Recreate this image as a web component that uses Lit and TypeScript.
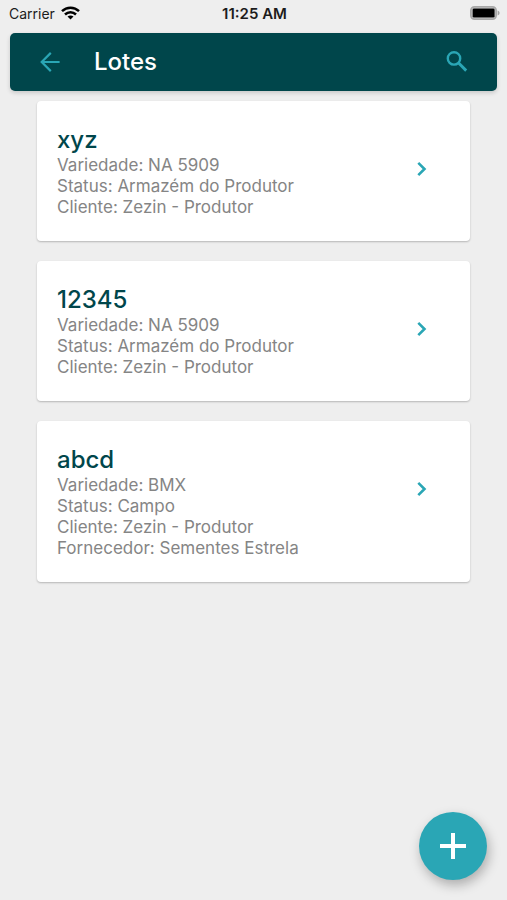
import { LitElement, html, css } from "lit";
import { customElement, property } from "lit/decorators.js";

interface Lote {
  nome: string;
  detalhes: [string, string][];
}

const LOTES: Lote[] = [
  {
    nome: "xyz",
    detalhes: [
      ["Variedade", "NA 5909"],
      ["Status", "Armazém do Produtor"],
      ["Cliente", "Zezin - Produtor"],
    ],
  },
  {
    nome: "12345",
    detalhes: [
      ["Variedade", "NA 5909"],
      ["Status", "Armazém do Produtor"],
      ["Cliente", "Zezin - Produtor"],
    ],
  },
  {
    nome: "abcd",
    detalhes: [
      ["Variedade", "BMX"],
      ["Status", "Campo"],
      ["Cliente", "Zezin - Produtor"],
      ["Fornecedor", "Sementes Estrela"],
    ],
  },
];

const buttonReset = css`
  button {
    display: flex;
    align-items: center;
    justify-content: center;
    margin: 0;
    padding: 0;
    border: 0;
    background: none;
    color: #2aa6b5;
    font: inherit;
    cursor: pointer;
  }
  svg {
    display: block;
  }
`;

@customElement("status-bar")
export class StatusBar extends LitElement {
  static styles = css`
    :host {
      display: grid;
      grid-template-columns: 1fr auto 1fr;
      align-items: center;
      height: 26px;
      padding: 0 7px 0 9px;
      font-size: 14px;
      color: #1c1c1c;
    }
    .carrier {
      display: flex;
      align-items: center;
      gap: 6px;
    }
    .time {
      font-size: 15px;
      font-weight: 600;
    }
    .battery {
      justify-self: end;
    }
    svg {
      display: block;
    }
  `;

  render() {
    return html`
      <div class="carrier">
        <span>Carrier</span>
        <svg width="19" height="14" viewBox="0 0 19 14" fill="none" stroke="#000" stroke-width="2.5" aria-hidden="true">
          <path d="M1 5.2C5.8 0.6 13.2 0.6 18 5.2" />
          <path d="M4 8.5C7.2 5.4 11.8 5.4 15 8.5" />
          <path d="M9.5 13.6L6.5 10.6C8.2 9.1 10.8 9.1 12.5 10.6Z" fill="#000" stroke="none" />
        </svg>
      </div>
      <span class="time">11:25 AM</span>
      <svg class="battery" width="30" height="14" viewBox="0 0 30 14" aria-hidden="true">
        <rect x="0.9" y="0.9" width="25.2" height="12.2" rx="3.6" fill="#d8d8d8" stroke="#a8a8a8" stroke-width="1.8" />
        <rect x="2.6" y="2.4" width="22" height="9.2" rx="1.4" fill="#000" />
        <path d="M27.6 4.6C30.2 5.4 30.2 8.6 27.6 9.4Z" fill="#a3a3a3" />
      </svg>
    `;
  }
}

@customElement("app-bar")
export class AppBar extends LitElement {
  @property() heading = "";

  static styles = [
    buttonReset,
    css`
      :host {
        display: flex;
        align-items: center;
        height: 58px;
        padding: 0 20px;
        box-sizing: border-box;
        border-radius: 5px;
        background: #00464b;
        box-shadow: 0 2px 4px rgba(0, 0, 0, 0.16);
      }
      button {
        width: 40px;
        height: 40px;
      }
      h1 {
        flex: 1;
        margin: 0 0 0 24px;
        font-size: 24px;
        line-height: 32px;
        font-weight: 500;
        color: #fff;
      }
    `,
  ];

  render() {
    return html`
      <button type="button" aria-label="Voltar">
        <svg width="20" height="20" viewBox="0 0 20 20" fill="none" stroke="currentColor" stroke-width="2.2">
          <path d="M19.6 10H2M10.8 0.9L1.7 10L10.8 19.1" />
        </svg>
      </button>
      <h1>${this.heading}</h1>
      <button type="button" aria-label="Buscar">
        <svg width="22" height="22" viewBox="0 0 22 22" fill="none" stroke="currentColor">
          <circle cx="8" cy="7.4" r="6.2" stroke-width="2.4" />
          <path d="M12.4 11.8L20.2 19.6" stroke-width="2.9" />
        </svg>
      </button>
    `;
  }
}

@customElement("lote-card")
export class LoteCard extends LitElement {
  @property({ attribute: false }) lote!: Lote;

  static styles = [
    buttonReset,
    css`
      :host {
        display: flex;
        align-items: flex-start;
        padding: 24px 28px 23px 20px;
        border-radius: 4px;
        background: #fff;
        box-shadow: 0 1px 2px rgba(0, 0, 0, 0.24);
      }
      .text {
        flex: 1;
        min-width: 0;
      }
      h2 {
        margin: 0;
        font-size: 24px;
        line-height: 30px;
        font-weight: 500;
        color: #00464b;
      }
      p {
        margin: 0;
        font-size: 17px;
        line-height: 21px;
        color: #858585;
      }
      button {
        width: 40px;
        height: 40px;
        margin-top: 24px;
      }
    `,
  ];

  render() {
    return html`
      <div class="text">
        <h2>${this.lote.nome}</h2>
        ${this.lote.detalhes.map(([rotulo, valor]) => html`<p>${rotulo}: ${valor}</p>`)}
      </div>
      <button type="button" aria-label="Abrir lote ${this.lote.nome}">
        <svg width="10" height="16" viewBox="0 0 10 16" fill="none" stroke="currentColor" stroke-width="2.6">
          <path d="M1.3 1.8L7.5 8L1.3 14.2" />
        </svg>
      </button>
    `;
  }
}

@customElement("app-root")
export class AppRoot extends LitElement {
  static styles = [
    buttonReset,
    css`
      :host {
        display: flex;
        flex-direction: column;
        min-height: 100vh;
        background: #eeeeee;
        font-family: Inter, "Liberation Sans", sans-serif;
      }
      app-bar {
        margin: 7px 10px 0;
      }
      main {
        display: flex;
        flex-direction: column;
        gap: 20px;
        padding: 10px 37px 100px;
      }
      .add {
        position: fixed;
        right: 20px;
        bottom: 20px;
        width: 68px;
        height: 68px;
        border-radius: 50%;
        background: #2aa6b5;
        color: #fff;
        box-shadow: 2px 5px 12px rgba(0, 0, 0, 0.28);
      }
    `,
  ];

  render() {
    return html`
      <status-bar></status-bar>
      <app-bar heading="Lotes"></app-bar>
      <main>${LOTES.map((lote) => html`<lote-card .lote=${lote}></lote-card>`)}</main>
      <button class="add" type="button" aria-label="Adicionar lote">
        <svg width="26" height="26" viewBox="0 0 26 26" fill="none" stroke="currentColor" stroke-width="4">
          <path d="M13 0V26M0 13H26" />
        </svg>
      </button>
    `;
  }
}
